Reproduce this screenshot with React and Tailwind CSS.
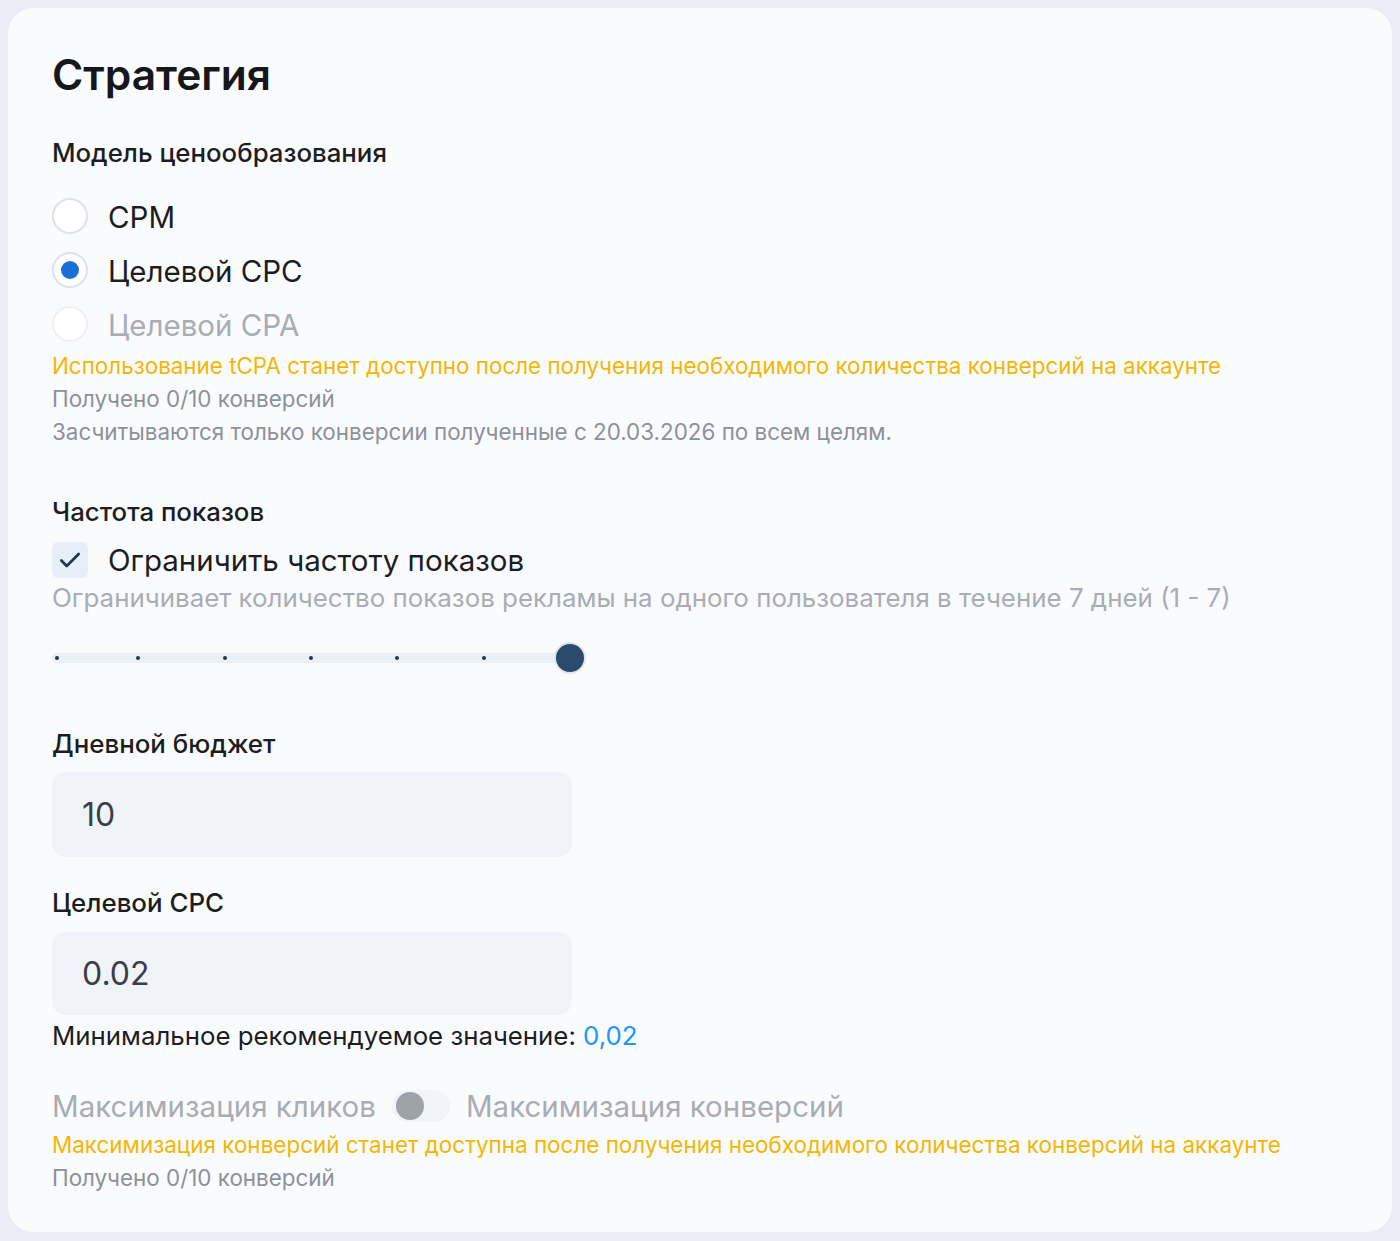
import React from "react";

const font = { fontFamily: "Inter, 'Noto Sans', sans-serif" };

function Radio({ checked, disabled, label }) {
  return (
    <label className="flex items-center gap-5 h-[54px]">
      <span
        className={`flex items-center justify-center w-9 h-9 rounded-full border-2 ${
          disabled ? "border-[#eef0f3]" : "border-[#dfe2e6]"
        } bg-white`}
      >
        {checked && <span className="w-[18px] h-[18px] rounded-full bg-[#1a6fd6]" />}
      </span>
      <span className={`pt-[3px] text-[29.5px] ${disabled ? "text-[#a9adb3]" : "text-[#1c1d1f]"}`}>{label}</span>
    </label>
  );
}

// Tick offsets of the 1–7 frequency slider, in px from the track start
const ticks = [5, 86, 173, 259, 345, 432];

function Slider() {
  return (
    <div className="relative w-[532px] h-7 mt-[29px]">
      <div className="absolute left-0 right-[6px] top-[9px] h-[10px] rounded-full bg-[#ebeff6]" />
      {ticks.map((x) => (
        <span
          key={x}
          className="absolute top-[12px] w-1 h-1 rounded-full bg-[#26364b]"
          style={{ left: x - 2 }}
        />
      ))}
      <span className="absolute top-0 left-[504px] w-7 h-7 rounded-full bg-[#2b4a6c] ring-2 ring-[#dde6f2]" />
    </div>
  );
}

export default function App() {
  return (
    <div className="min-h-[1241px] bg-[#eaedf5] p-2" style={font}>
      <div className="rounded-[26px] bg-[#fafbfd] px-11 pt-[42px] pb-[38px] min-h-[1224px]">
        <h1 className="text-[42.5px] leading-[50px] font-semibold text-[#16171a]">Стратегия</h1>

        <h2 className="mt-[37px] text-[25.8px] leading-[32px] font-medium text-[#1c1d1f]">Модель ценообразования</h2>
        <div className="mt-[20px] flex flex-col">
          <Radio label="CPM" />
          <Radio label="Целевой CPC" checked />
          <Radio label="Целевой CPA" disabled />
        </div>
        <p className="-mt-[2px] text-[22.4px] leading-[33px] text-[#f2b705]">
          Использование tCPA станет доступно после получения необходимого количества конверсий на аккаунте
        </p>
        <p className="text-[22.4px] leading-[33px] text-[#8d9198]">Получено 0/10 конверсий</p>
        <p className="text-[22.4px] leading-[33px] text-[#8d9198]">
          Засчитываются только конверсии полученные с 20.03.2026 по всем целям.
        </p>

        <h2 className="mt-[48px] text-[25.8px] leading-[32px] font-medium text-[#1c1d1f]">Частота показов</h2>
        <label className="mt-[14px] flex items-center gap-5 h-9">
          <span className="flex items-center justify-center w-9 h-9 rounded-[6px] bg-[#e6eef9]">
            <svg width="26" height="26" viewBox="0 0 24 24" fill="none" stroke="#24354b" strokeWidth="2.5" strokeLinecap="round" strokeLinejoin="round">
              <path d="M4 12.5l5 5L20 6.5" />
            </svg>
          </span>
          <span className="text-[29.5px] text-[#1c1d1f]">Ограничить частоту показов</span>
        </label>
        <p className="mt-[3px] text-[25.9px] leading-[34px] text-[#a9adb3]">
          Ограничивает количество показов рекламы на одного пользователя в течение 7 дней (1 - 7)
        </p>
        <Slider />

        <h2 className="mt-[56px] text-[25.9px] leading-[32px] font-medium text-[#1c1d1f]">Дневной бюджет</h2>
        <div className="mt-[12px] w-[520px] h-[85px] rounded-[14px] bg-[#f0f3f8] flex items-center px-[30px] text-[32px] text-[#3a3e45]">
          10
        </div>

        <h2 className="mt-[30px] text-[25.9px] leading-[32px] font-medium text-[#1c1d1f]">Целевой CPC</h2>
        <div className="mt-[13px] w-[520px] h-[83px] rounded-[14px] bg-[#f0f3f8] flex items-center px-[30px] text-[32px] text-[#3a3e45]">
          0.02
        </div>
        <p className="mt-[4px] text-[25.8px] leading-[34px] text-[#1c1d1f]">
          Минимальное рекомендуемое значение: <span className="text-[#2196f3]">0,02</span>
        </p>

        <div className="mt-[33px] flex items-center gap-4 h-10">
          <span className="text-[29.5px] text-[#a9adb3]">Максимизация кликов</span>
          <span className="relative w-[58px] h-[32px] rounded-full bg-[#f1f4f8]">
            <span className="absolute left-[4px] top-[2px] w-7 h-7 rounded-full bg-[#9ea2a9]" />
          </span>
          <span className="text-[29.5px] text-[#a9adb3]">Максимизация конверсий</span>
        </div>
        <p className="mt-[2px] text-[22.45px] leading-[33px] text-[#f2b705]">
          Максимизация конверсий станет доступна после получения необходимого количества конверсий на аккаунте
        </p>
        <p className="text-[22.4px] leading-[33px] text-[#8d9198]">Получено 0/10 конверсий</p>
      </div>
    </div>
  );
}
